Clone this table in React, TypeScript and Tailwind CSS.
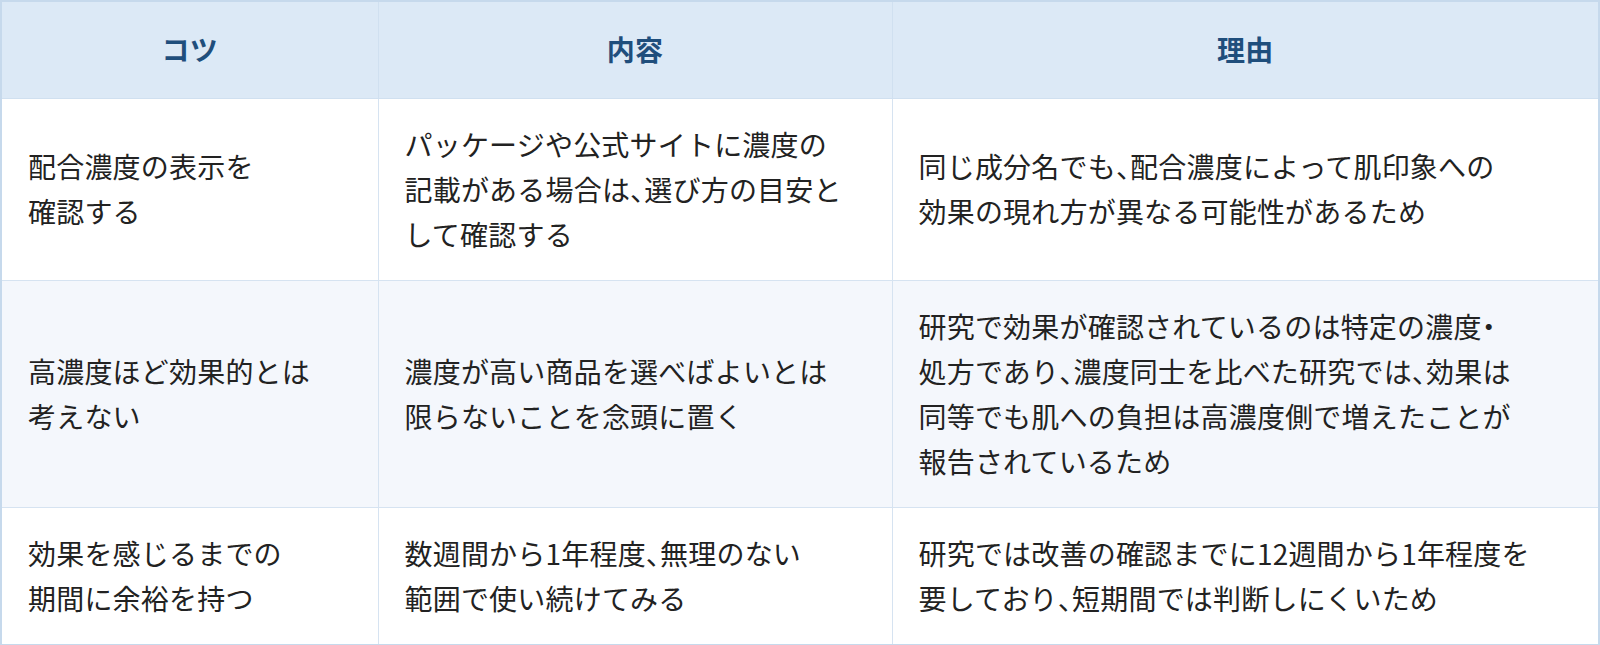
import React from 'react';

interface TipRow {
  tip: string[];
  detail: string[];
  reason: string[];
}

const rows: TipRow[] = [
  {
    tip: ['配合濃度の表示を', '確認する'],
    detail: ['パッケージや公式サイトに濃度の', '記載がある場合は、選び方の目安と', 'して確認する'],
    reason: ['同じ成分名でも、配合濃度によって肌印象への', '効果の現れ方が異なる可能性があるため'],
  },
  {
    tip: ['高濃度ほど効果的とは', '考えない'],
    detail: ['濃度が高い商品を選べばよいとは', '限らないことを念頭に置く'],
    reason: [
      '研究で効果が確認されているのは特定の濃度・',
      '処方であり、濃度同士を比べた研究では、効果は',
      '同等でも肌への負担は高濃度側で増えたことが',
      '報告されているため',
    ],
  },
  {
    tip: ['効果を感じるまでの', '期間に余裕を持つ'],
    detail: ['数週間から1年程度、無理のない', '範囲で使い続けてみる'],
    reason: ['研究では改善の確認までに12週間から1年程度を', '要しており、短期間では判断しにくいため'],
  },
];

// 句読点だけ半角幅にする
function Line({ text }: { text: string }) {
  const parts = text.split(/([、・])/);
  return (
    <div className="whitespace-nowrap">
      {parts.map((p, i) =>
        p === '、' || p === '・' ? (
          <span key={i} className="[font-feature-settings:'halt']">{p}</span>
        ) : (
          <React.Fragment key={i}>{p}</React.Fragment>
        ),
      )}
    </div>
  );
}

function Lines({ lines }: { lines: string[] }) {
  return (
    <>
      {lines.map((l, i) => (
        <Line key={i} text={l} />
      ))}
    </>
  );
}

export default function App() {
  const cell = 'border border-[#d6e3f1] pl-[26px] pr-[20px] py-[23px] align-middle text-left';
  return (
    <div
      className="w-[1600px] h-[645px] bg-white"
      style={{ fontFamily: '"Noto Sans CJK JP", "Noto Sans", sans-serif' }}
    >
      <table className="w-full h-full table-fixed border-collapse border-2 border-[#c6d9ec] text-[28px] leading-[45px] tracking-[0.2px] text-[#222222]">
        <colgroup>
          <col className="w-[377px]" />
          <col className="w-[514px]" />
          <col />
        </colgroup>
        <thead>
          <tr className="bg-[#dce9f6] h-[97px]">
            {['コツ', '内容', '理由'].map((h) => (
              <th key={h} className="border border-[#d0e0f0] font-bold text-[#1f4e7c] text-center align-middle">
                {h}
              </th>
            ))}
          </tr>
        </thead>
        <tbody>
          {rows.map((r, i) => (
            <tr key={i} className={i % 2 === 1 ? 'bg-[#f4f7fc]' : 'bg-white'}>
              <td className={cell}><Lines lines={r.tip} /></td>
              <td className={cell}><Lines lines={r.detail} /></td>
              <td className={cell}><Lines lines={r.reason} /></td>
            </tr>
          ))}
        </tbody>
      </table>
    </div>
  );
}
